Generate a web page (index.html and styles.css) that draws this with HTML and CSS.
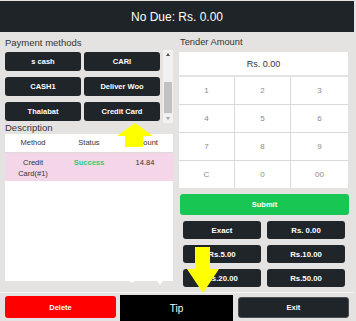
FILE: index.html
```html
<!DOCTYPE html>
<html>
<head>
<meta charset="utf-8">
<link rel="stylesheet" href="styles.css">
</head>
<body>
<div class="modal">
  <div class="header">No Due: Rs. 0.00</div>
  <div class="main">
    <div class="left">
      <div class="label">Payment methods</div>
      <div class="methods">
        <div class="method-grid">
          <div class="btn">s cash</div>
          <div class="btn">CARI</div>
          <div class="btn">CASH1</div>
          <div class="btn">Deliver Woo</div>
          <div class="btn">Thalabat</div>
          <div class="btn">Credit Card</div>
        </div>
        <div class="scrollbar">
          <div class="sb-up"></div>
          <div class="sb-track"><div class="sb-thumb"></div></div>
          <div class="sb-down"></div>
        </div>
      </div>
      <div class="label small">Description</div>
      <div class="table">
        <div class="trow thead">
          <div>Method</div><div>Status</div><div>Amount</div>
        </div>
        <div class="trow tpink">
          <div>Credit<br>Card(#1)</div><div class="success">Success</div><div>14.84</div>
        </div>
        <span class="caret c1"></span>
        <span class="caret c2"></span>
      </div>
    </div>
    <div class="right">
      <div class="label">Tender Amount</div>
      <div class="display">Rs. 0.00</div>
      <div class="keypad">
        <div>1</div><div>2</div><div>3</div>
        <div>4</div><div>5</div><div>6</div>
        <div>7</div><div>8</div><div>9</div>
        <div>C</div><div>0</div><div>00</div>
      </div>
      <div class="submit">Submit</div>
      <div class="quick">
        <div class="btn">Exact</div>
        <div class="btn">Rs. 0.00</div>
        <div class="btn">Rs.5.00</div>
        <div class="btn">Rs.10.00</div>
        <div class="btn">Rs.20.00</div>
        <div class="btn">Rs.50.00</div>
      </div>
    </div>
  </div>
  <div class="footer">
    <div class="delete">Delete</div>
    <div class="tip">Tip</div>
    <div class="exit">Exit</div>
  </div>
</div>
<svg class="arrow-up" width="38" height="26" viewBox="0 0 38 26">
  <polygon points="18,0 36,13 26,13 26,24 8,24 8,13 0,13" fill="#ffff00"/>
</svg>
<svg class="arrow-down" width="34" height="48" viewBox="0 0 34 48">
  <polygon points="8,0 23,0 23,22 32,22 16,46 0,22 8,22" fill="#ffff00"/>
</svg>
</body>
</html>
```
FILE: styles.css
```css
* { box-sizing: border-box; }
html, body {
  margin: 0;
  padding: 0;
}
body {
  width: 356px;
  height: 321px;
  overflow: hidden;
  background: #e5e3e1;
  font-family: "Liberation Sans", Arial, sans-serif;
  position: relative;
}
.modal {
  width: 355px;
  height: 321px;
  display: flex;
  flex-direction: column;
}
.header {
  margin-top: 1px;
  width: 354px;
  height: 31px;
  flex: none;
  background: #1e2427;
  color: #fff;
  font-size: 12px;
  display: flex;
  align-items: center;
  justify-content: center;
}
.main {
  display: flex;
  gap: 6px;
  padding-left: 5px;
  height: 260px;
  flex: none;
}
.left {
  width: 168px;
  display: flex;
  flex-direction: column;
}
.right {
  width: 170px;
  display: flex;
  flex-direction: column;
}
.label {
  height: 20px;
  padding-top: 4px;
  font-size: 9.5px;
  line-height: 13px;
  color: #333;
}
.right .label { padding-left: 1px; font-size: 9.3px; }
.label.small {
  height: 13px;
  padding-top: 0;
  line-height: 13px;
  font-size: 9.5px;
}
.methods {
  height: 71px;
  display: flex;
  gap: 3px;
  margin-top: -2px;
}
.method-grid {
  width: 155px;
  padding-top: 2px;
  display: grid;
  grid-template-columns: 76px 76px;
  grid-auto-rows: 19px;
  column-gap: 3px;
  row-gap: 6px;
}
.btn {
  background: #1f2528;
  color: #fff;
  border-radius: 3px;
  font-size: 7.5px;
  font-weight: bold;
  display: flex;
  align-items: center;
  justify-content: center;
}
.scrollbar {
  width: 10px;
  height: 73px;
  background: #f1f1f1;
  display: flex;
  flex-direction: column;
  align-items: center;
}
.sb-up, .sb-down {
  width: 0;
  height: 0;
  margin: 3px 0;
  border-left: 2.5px solid transparent;
  border-right: 2.5px solid transparent;
}
.sb-up { border-bottom: 3px solid #505050; }
.sb-down { border-top: 3px solid #a3a3a3; }
.sb-track {
  flex: 1;
  width: 100%;
  display: flex;
  flex-direction: column;
  justify-content: flex-end;
  align-items: center;
  padding-bottom: 1px;
}
.sb-thumb {
  width: 8px;
  height: 31px;
  background: #c1c1c1;
}
.table {
  position: relative;
  height: 147px;
  background: #fff;
}
.trow {
  display: grid;
  grid-template-columns: 56px 56px 56px;
  text-align: center;
  font-size: 7.5px;
  color: #333;
}
.thead {
  height: 19px;
  line-height: 18px;
  border-bottom: 1px solid #dcdcdc;
}
.tpink {
  height: 28px;
  background: #f5d5e8;
  padding-top: 4px;
  line-height: 11px;
}
.success { color: #2ecc71; font-weight: bold; }
.caret {
  position: absolute;
  width: 0;
  height: 0;
  border-left: 3px solid transparent;
  border-right: 3px solid transparent;
  border-top: 4px solid #fff;
  top: 147px;
}
.c1 { left: 124px; border-top-width: 2px; }
.c2 { left: 152px; }
.display {
  width: 169px;
  height: 23px;
  background: #fff;
  font-size: 9px;
  color: #333;
  display: flex;
  align-items: center;
  justify-content: center;
}
.keypad {
  margin-top: 2px;
  width: 169px;
  display: grid;
  grid-template-columns: 56px 56px 57px;
  grid-auto-rows: 27px;
  background: #d9d9d9;
  gap: 1px 0;
}
.keypad div {
  background: #fff;
  color: #8a8a8a;
  font-size: 8px;
  display: flex;
  align-items: center;
  justify-content: center;
  border-right: 1px solid #d9d9d9;
}
.keypad div:nth-child(3n) { border-right: none; }
.submit {
  margin-top: 6px;
  margin-left: 1px;
  width: 169px;
  height: 21px;
  background: #17c653;
  border-radius: 3px;
  color: #fff;
  font-size: 7.5px;
  font-weight: bold;
  display: flex;
  align-items: center;
  justify-content: center;
}
.quick {
  margin-top: 6px;
  padding: 0 4px;
  display: grid;
  grid-template-columns: 78px 78px;
  grid-auto-rows: 18px;
  column-gap: 6px;
  row-gap: 6px;
}
.quick .btn { font-size: 7.8px; }
.footer {
  flex: 1;
  border-top: 1px solid #f4f4f4;
  display: flex;
  align-items: flex-start;
  padding-left: 5px;
  padding-top: 2px;
}
.delete {
  width: 111px;
  height: 22px;
  margin-top: 1px;
  background: #ff0000;
  border-radius: 3px;
  color: #fff;
  font-size: 7.5px;
  font-weight: bold;
  display: flex;
  align-items: center;
  justify-content: center;
}
.tip {
  margin-left: 4px;
  width: 113px;
  height: 26px;
  background: #000;
  color: #fff;
  font-size: 10px;
  display: flex;
  align-items: center;
  justify-content: center;
}
.exit {
  margin-left: 5px;
  margin-top: 2px;
  width: 111px;
  height: 21px;
  background: #1f2528;
  border: 1px solid #4a4f52;
  border-radius: 3px;
  color: #fff;
  font-size: 7.5px;
  font-weight: bold;
  display: flex;
  align-items: center;
  justify-content: center;
}
.arrow-up {
  position: absolute;
  left: 117px;
  top: 123px;
}
.arrow-down {
  position: absolute;
  left: 187px;
  top: 247px;
}
```
